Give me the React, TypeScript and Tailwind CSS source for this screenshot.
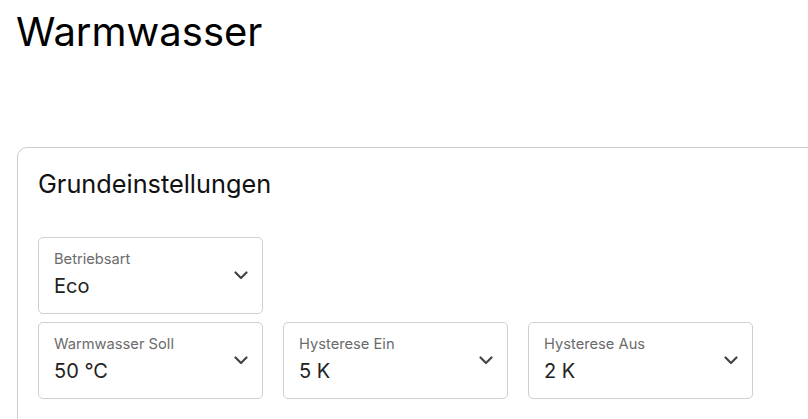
import React from "react";

function Chevron() {
  return (
    <svg width="14" height="9" viewBox="0 0 14 9" className="shrink-0">
      <path d="M1.5 1.5 L7 7 L12.5 1.5" fill="none" stroke="#444" strokeWidth="2.2" strokeLinecap="round" strokeLinejoin="round" />
    </svg>
  );
}

function SelectBox({ label, value }: { label: string; value: string }) {
  return (
    <div className="w-[225px] h-[77px] border border-[#cfcfcf] rounded-[5px] bg-white flex items-center justify-between pl-[15px] pr-[14px]">
      <div className="flex flex-col pb-[2px]">
        <span className="text-[14.7px] leading-[20px] text-[#6b6b6b]">{label}</span>
        <span className="text-[20px] leading-[28px] text-[#222] mt-[3px]">{value}</span>
      </div>
      <Chevron />
    </div>
  );
}

export default function App() {
  return (
    <div className="w-[808px] h-[419px] overflow-hidden bg-white" style={{ fontFamily: "Inter, 'Noto Sans', sans-serif" }}>
      <div className="pl-[16px] pt-[10px]">
        <h1 className="text-[40px] leading-[44px] text-black font-normal">Warmwasser</h1>
        <div className="mt-[93px] ml-[1px] w-[1000px] border border-[#cccccc] rounded-[10px] pt-[20px] px-[20px] pb-[40px]">
          <h2 className="text-[25.3px] leading-[32px] text-[#111] font-normal">Grundeinstellungen</h2>
          <div className="mt-[37px] flex flex-col gap-[8px]">
            <div className="flex gap-[20px]">
              <SelectBox label="Betriebsart" value="Eco" />
            </div>
            <div className="flex gap-[20px]">
              <SelectBox label="Warmwasser Soll" value="50 °C" />
              <SelectBox label="Hysterese Ein" value="5 K" />
              <SelectBox label="Hysterese Aus" value="2 K" />
            </div>
          </div>
        </div>
      </div>
    </div>
  );
}
